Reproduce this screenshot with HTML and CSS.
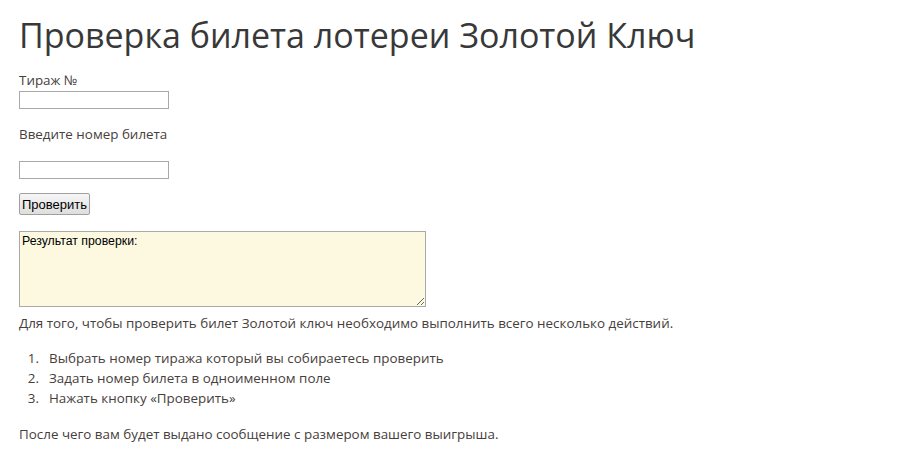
FILE: index.html
```html
<!DOCTYPE html>
<html lang="ru">
<head>
<meta charset="utf-8">
<title>Проверка билета лотереи Золотой Ключ</title>
<link rel="stylesheet" href="styles.css">
</head>
<body>
<div class="page">
  <h1 class="title">Проверка билета лотереи Золотой Ключ</h1>
  <form class="check-form">
    <label class="field-label" for="draw">Тираж №</label>
    <input class="field-input" id="draw" type="text">
    <label class="field-label field-label--ticket" for="ticket">Введите номер билета</label>
    <input class="field-input field-input--ticket" id="ticket" type="text">
    <button class="check-btn" type="button">Проверить</button>
    <textarea class="result">Результат проверки:</textarea>
  </form>
  <p class="intro">Для того, чтобы проверить билет Золотой ключ необходимо выполнить всего несколько действий.</p>
  <ol class="steps">
    <li class="step">Выбрать номер тиража который вы собираетесь проверить</li>
    <li class="step">Задать номер билета в одноименном поле</li>
    <li class="step">Нажать кнопку «Проверить»</li>
  </ol>
  <p class="outro">После чего вам будет выдано сообщение с размером вашего выигрыша.</p>
</div>
</body>
</html>
```

FILE: styles.css
```css
html, body {
  margin: 0;
  padding: 0;
  background: #fff;
}
.page {
  padding: 10px 19px 0;
  font-family: "Open Sans", "DejaVu Sans", sans-serif;
  font-size: 13.4px;
  line-height: 20px;
  color: #46403c;
}
.title {
  margin: 0 0 10px;
  font-size: 34px;
  line-height: 50px;
  font-weight: normal;
  color: #383838;
}
.check-form {
  display: flex;
  flex-direction: column;
  align-items: flex-start;
}
.field-label {
  display: block;
  line-height: 20px;
  margin-bottom: 1px;
}
.field-label--ticket {
  margin-top: 15px;
  margin-bottom: 17px;
}
.field-input {
  width: 150px;
  height: 18px;
  box-sizing: border-box;
  border: 1px solid #a9a9a9;
  padding: 0 2px;
  margin: 0;
  background: #fff;
}
.check-btn {
  margin-top: 14px;
  height: 22px;
  box-sizing: border-box;
  padding: 0 2px;
  font-family: "Liberation Sans", Arial, sans-serif;
  font-size: 13px;
  color: #000;
  background: linear-gradient(#f6f6f6, #dedede);
  border: 1px solid #a0a0a0;
  border-radius: 2px;
}
.result {
  margin-top: 16px;
  width: 407px;
  height: 76px;
  box-sizing: border-box;
  padding: 2px 2px;
  font-family: "Liberation Sans", Arial, sans-serif;
  font-size: 12.3px;
  line-height: 15px;
  color: #000;
  background: #fcf9e0;
  border: 1px solid #a9a9a9;
  resize: both;
}
.intro {
  margin: 6px 0 0;
}
.steps {
  margin: 15px 0 0;
  padding: 0;
  list-style: none;
  counter-reset: step;
}
.step {
  display: flex;
  counter-increment: step;
}
.step::before {
  content: counter(step) ".";
  flex: 0 0 20px;
  padding-right: 10px;
  text-align: right;
}
.outro {
  margin: 16px 0 0;
}
```
